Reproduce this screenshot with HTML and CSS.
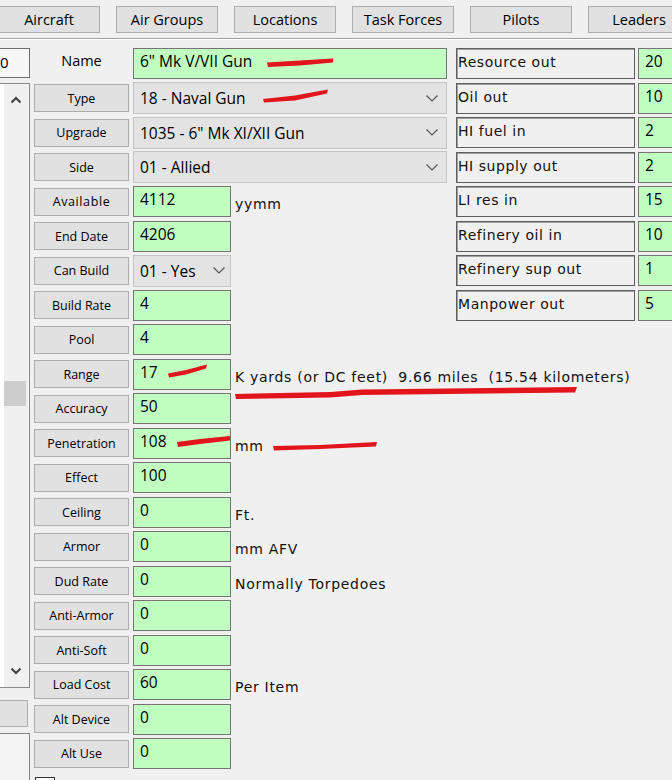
FILE: index.html
```html
<!DOCTYPE html>
<html>
<head>
<meta charset="utf-8">
<link rel="stylesheet" href="styles.css">
</head>
<body>
<div class="app">
  <nav class="tabs">
    <div class="tab">Aircraft</div>
    <div class="tab">Air Groups</div>
    <div class="tab">Locations</div>
    <div class="tab">Task Forces</div>
    <div class="tab">Pilots</div>
    <div class="tab">Leaders</div>
  </nav>
  <div class="sep"></div>
  <main class="main">
    <aside class="left">
      <div class="idbox">0</div>
      <div class="list">
        <div class="items"></div>
        <div class="scroll">
          <svg class="sarrow up" width="12" height="8" viewBox="0 0 12 8"><polyline points="1.5,6.5 6,2 10.5,6.5" fill="none" stroke="#404040" stroke-width="2"/></svg>
          <div class="track"><div class="thumb"></div></div>
          <svg class="sarrow down" width="12" height="8" viewBox="0 0 12 8"><polyline points="1.5,1.5 6,6 10.5,1.5" fill="none" stroke="#404040" stroke-width="2"/></svg>
        </div>
      </div>
      <div class="lbtn"></div>
      <div class="lbox"></div>
    </aside>

    <section class="form">
      <div class="row"><span class="plain">Name</span><div class="field wide">6" Mk V/VII Gun</div></div>
      <div class="row"><div class="btn">Type</div><div class="combo wide"><span>18 - Naval Gun</span><svg class="chev" width="12" height="7" viewBox="0 0 12 7"><polyline points="0.5,0.5 6,6 11.5,0.5" fill="none" stroke="#555" stroke-width="1.2"/></svg></div></div>
      <div class="row"><div class="btn">Upgrade</div><div class="combo wide"><span>1035 - 6" Mk XI/XII Gun</span><svg class="chev" width="12" height="7" viewBox="0 0 12 7"><polyline points="0.5,0.5 6,6 11.5,0.5" fill="none" stroke="#555" stroke-width="1.2"/></svg></div></div>
      <div class="row"><div class="btn">Side</div><div class="combo wide"><span>01 - Allied</span><svg class="chev" width="12" height="7" viewBox="0 0 12 7"><polyline points="0.5,0.5 6,6 11.5,0.5" fill="none" stroke="#555" stroke-width="1.2"/></svg></div></div>
      <div class="row"><div class="btn spaced">Available</div><div class="field">4112</div><span class="unit">yymm</span></div>
      <div class="row"><div class="btn">End Date</div><div class="field">4206</div></div>
      <div class="row"><div class="btn">Can Build</div><div class="combo small"><span>01 - Yes</span><svg class="chev" width="12" height="7" viewBox="0 0 12 7"><polyline points="0.5,0.5 6,6 11.5,0.5" fill="none" stroke="#555" stroke-width="1.2"/></svg></div></div>
      <div class="row"><div class="btn">Build Rate</div><div class="field">4</div></div>
      <div class="row"><div class="btn">Pool</div><div class="field">4</div></div>
      <div class="row"><div class="btn">Range</div><div class="field">17</div><span class="unit">K yards (or DC feet)  9.66 miles  (15.54 kilometers)</span></div>
      <div class="row"><div class="btn">Accuracy</div><div class="field">50</div></div>
      <div class="row"><div class="btn">Penetration</div><div class="field">108</div><span class="unit">mm</span></div>
      <div class="row"><div class="btn">Effect</div><div class="field">100</div></div>
      <div class="row"><div class="btn">Ceiling</div><div class="field">0</div><span class="unit">Ft.</span></div>
      <div class="row"><div class="btn">Armor</div><div class="field">0</div><span class="unit">mm AFV</span></div>
      <div class="row"><div class="btn">Dud Rate</div><div class="field">0</div><span class="unit">Normally Torpedoes</span></div>
      <div class="row"><div class="btn">Anti-Armor</div><div class="field">0</div></div>
      <div class="row"><div class="btn">Anti-Soft</div><div class="field">0</div></div>
      <div class="row"><div class="btn">Load Cost</div><div class="field">60</div><span class="unit">Per Item</span></div>
      <div class="row"><div class="btn">Alt Device</div><div class="field">0</div></div>
      <div class="row"><div class="btn">Alt Use</div><div class="field">0</div></div>
      <div class="check"></div>
    </section>

    <section class="res">
      <div class="rrow"><div class="rlabel">Resource out</div><div class="rval">20</div></div>
      <div class="rrow"><div class="rlabel">Oil out</div><div class="rval">10</div></div>
      <div class="rrow"><div class="rlabel">HI fuel in</div><div class="rval">2</div></div>
      <div class="rrow"><div class="rlabel">HI supply out</div><div class="rval">2</div></div>
      <div class="rrow"><div class="rlabel">LI res in</div><div class="rval">15</div></div>
      <div class="rrow"><div class="rlabel">Refinery oil in</div><div class="rval">10</div></div>
      <div class="rrow"><div class="rlabel">Refinery sup out</div><div class="rval">1</div></div>
      <div class="rrow"><div class="rlabel">Manpower out</div><div class="rval">5</div></div>
    </section>
  </main>

  <svg class="marks" width="672" height="780" viewBox="0 0 672 780">
    <g fill="#e3151c">
      <polygon points="267,62.5 300,60.5 333,58.5 333,62.5 300,65.5 268,67"/>
      <polygon points="263,99 295,95.5 328,89.5 327,93.5 295,100.5 264,102.5"/>
      <polygon points="168,373.5 186,370 207,364.5 206,368.5 186,374.5 169,377.5"/>
      <polygon points="235,394 330,392 362,389.5 577,387 575,392.5 362,395 330,397.5 236,399"/>
      <polygon points="177,442 200,439 230,436 230,440.5 200,444 178,447"/>
      <polygon points="273,446 320,445 377,442 376,446.5 320,449 274,450.5"/>
    </g>
  </svg>
</div>
</body>
</html>
```

FILE: styles.css
```css
* { box-sizing: border-box; }
html, body { margin: 0; padding: 0; }
body { background: #f0f0f0; }

.app {
  position: relative;
  width: 672px;
  height: 780px;
  overflow: hidden;
  background: #f0f0f0;
  font-family: "Open Sans", "Noto Sans", sans-serif;
  color: #000;
}

.tabs {
  display: flex;
  gap: 16px;
  padding-top: 6px;
  margin-left: -2px;
  white-space: nowrap;
}
.tab {
  flex: 0 0 102px;
  height: 27px;
  background: #e1e1e1;
  border: 1px solid #adadad;
  display: flex;
  align-items: center;
  justify-content: center;
  font-size: 14.5px;
}

.sep {
  margin-top: 5px;
  border-top: 1px solid #a0a0a0;
  border-bottom: 1px solid #ffffff;
}

.main {
  display: flex;
  align-items: flex-start;
  padding-top: 6.25px;
}

/* left column */
.left {
  flex: 0 0 40px;
  margin-left: -10px;
  display: flex;
  flex-direction: column;
}
.idbox {
  margin-top: 1.25px;
  height: 30px;
  border: 1px solid #6e6e6e;
  background: #f7f7f7;
  padding-left: 9px;
  font-size: 15px;
  line-height: 27px;
}
.list {
  margin-top: 5.5px;
  height: 605px;
  border: 1px solid #8a8a8a;
  display: flex;
  background: #fff;
}
.items { flex: 0 0 13px; background: #fff; }
.scroll {
  flex: 1;
  background: #f0f0f0;
  display: flex;
  flex-direction: column;
  align-items: center;
}
.sarrow { margin-top: 12px; margin-left: -1px; }
.sarrow.down { margin-top: 0; margin-bottom: 12px; }
.track { flex: 1; width: 100%; padding-top: 277px; }
.thumb { width: 22px; height: 25px; background: #cdcdcd; }
.lbtn {
  margin-top: 12px;
  width: 38px;
  height: 27px;
  background: #e1e1e1;
  border: 1px solid #adadad;
}
.lbox {
  margin-top: 6px;
  height: 60px;
  border: 1px solid #828282;
  background: #f4f4f4;
}

/* form */
.form {
  flex: 0 0 413px;
  width: 413px;
  min-width: 0;
  margin-left: 4px;
}
.row {
  height: 34.5px;
  display: flex;
  align-items: center;
  gap: 4px;
  white-space: nowrap;
}
.btn, .plain {
  flex: 0 0 95px;
  height: 28px;
  display: flex;
  align-items: center;
  justify-content: center;
  font-size: 12.5px;
}
.btn {
  background: #e1e1e1;
  border: 1px solid #adadad;
}
.btn.spaced { letter-spacing: 0.6px; }
.plain {
  font-size: 14.5px;
  padding-bottom: 7px;
}
.field {
  flex: 0 0 98px;
  height: 31px;
  background: #c0ffc0;
  border: 1px solid #747474;
  padding: 1px 0 0 6px;
  font-size: 15.5px;
  line-height: 23px;
}
.field.wide { flex-basis: 314px; }
.combo {
  height: 32px;
  background: #e3e3e3;
  border: 1px solid #c4c4c4;
  display: flex;
  align-items: center;
  justify-content: space-between;
  padding: 0 8px 0 6px;
  font-size: 15.5px;
}
.combo.wide { flex: 0 0 314px; }
.combo.small { flex: 0 0 98px; padding-right: 5px; }
.chev { flex: none; }
.unit {
  font-family: "DejaVu Sans", sans-serif;
  font-size: 14px;
  letter-spacing: 0.7px;
  white-space: pre;
  padding-top: 5px;
  color: #111;
}
.check {
  margin-top: 6px;
  margin-left: 1px;
  width: 20px;
  height: 14px;
  border: 1px solid #333;
  background: #fff;
}

/* resources */
.res {
  flex: 0 0 230px;
  width: 230px;
  min-width: 0;
  margin-left: 9px;
}
.rrow {
  height: 34.5px;
  display: flex;
  align-items: center;
  gap: 3px;
}
.rlabel {
  flex: 0 0 179px;
  height: 31px;
  border: 1px solid #5e5e5e;
  box-shadow: inset 1px 1px 0 #a0a0a0;
  background: #f0f0f0;
  padding-left: 1px;
  font-family: "DejaVu Sans", sans-serif;
  font-size: 14px;
  letter-spacing: 0.55px;
  line-height: 27px;
  white-space: nowrap;
  color: #111;
}
.rval {
  flex: 0 0 44px;
  height: 31px;
  background: #c0ffc0;
  border: 1px solid #747474;
  padding: 1px 0 0 6px;
  font-size: 15.5px;
  line-height: 23px;
}

.marks {
  position: absolute;
  left: 0;
  top: 0;
  pointer-events: none;
}
```
